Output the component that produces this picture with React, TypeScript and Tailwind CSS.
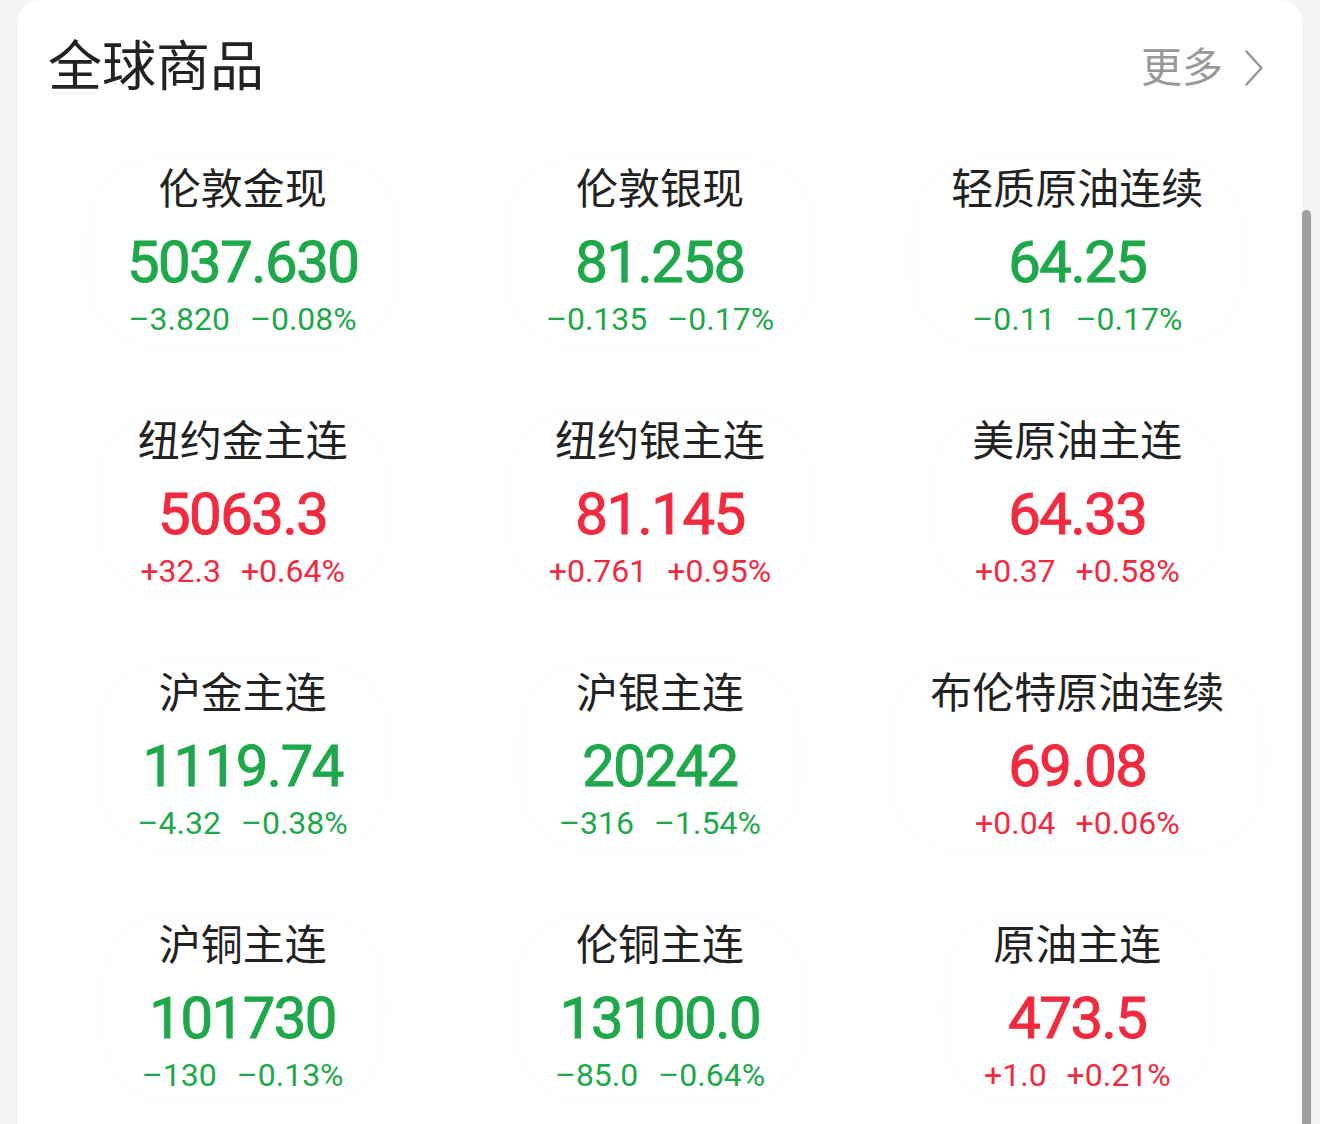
import React from "react";

type Item = { name: string; price: string; chg: string; pct: string; up: boolean };

const items: Item[] = [
  { name: "伦敦金现", price: "5037.630", chg: "–3.820", pct: "–0.08%", up: false },
  { name: "伦敦银现", price: "81.258", chg: "–0.135", pct: "–0.17%", up: false },
  { name: "轻质原油连续", price: "64.25", chg: "–0.11", pct: "–0.17%", up: false },
  { name: "纽约金主连", price: "5063.3", chg: "+32.3", pct: "+0.64%", up: true },
  { name: "纽约银主连", price: "81.145", chg: "+0.761", pct: "+0.95%", up: true },
  { name: "美原油主连", price: "64.33", chg: "+0.37", pct: "+0.58%", up: true },
  { name: "沪金主连", price: "1119.74", chg: "–4.32", pct: "–0.38%", up: false },
  { name: "沪银主连", price: "20242", chg: "–316", pct: "–1.54%", up: false },
  { name: "布伦特原油连续", price: "69.08", chg: "+0.04", pct: "+0.06%", up: true },
  { name: "沪铜主连", price: "101730", chg: "–130", pct: "–0.13%", up: false },
  { name: "伦铜主连", price: "13100.0", chg: "–85.0", pct: "–0.64%", up: false },
  { name: "原油主连", price: "473.5", chg: "+1.0", pct: "+0.21%", up: true },
];

function Cell({ it }: { it: Item }) {
  const color = it.up ? "text-[#f02a3f]" : "text-[#1fa84b]";
  return (
    <div className="flex justify-center">
      <div className="flex flex-col items-center px-8 rounded-[56px] shadow-[0_0_44px_rgba(0,0,0,0.016)]">
        <div className="text-[42px] leading-[48px] text-[#222222]">{it.name}</div>
        <div className={`mt-4 text-[58px] leading-[64px] font-normal tracking-[-1.5px] [-webkit-text-stroke:1px_currentColor] ${color}`}>{it.price}</div>
        <div className={`mt-[5px] flex gap-5 text-[32px] leading-[40px] font-normal ${color}`}>
          <span>{it.chg}</span>
          <span>{it.pct}</span>
        </div>
      </div>
    </div>
  );
}

export default function App() {
  return (
    <div
      className="w-[1320px] h-[1124px] overflow-hidden bg-[#f4f4f4] flex"
      style={{ fontFamily: 'Roboto, "Noto Sans CJK SC", sans-serif' }}
    >
      <div className="ml-[18px] w-[1284px] h-[1200px] bg-white rounded-t-[22px] flex flex-col">
        <div className="flex items-center justify-between pt-8 pl-[30px] pr-[39px] h-[104px]">
          <div className="text-[54px] leading-[72px] text-[#222222]">全球商品</div>
          <div className="flex items-center gap-[22px]">
            <span className="text-[41px] leading-[72px] text-[#999999]">更多</span>
            <svg width="18" height="36" viewBox="0 0 18 36" fill="none">
              <path d="M1.5 1.5 L16.5 18 L1.5 34.5" stroke="#999999" strokeWidth="2.6" strokeLinecap="round" strokeLinejoin="round" />
            </svg>
          </div>
        </div>
        <div className="mt-[62px] px-4 grid grid-cols-3 gap-y-[79px]">
          {items.map((it) => (
            <Cell key={it.name} it={it} />
          ))}
        </div>
      </div>
      <div className="w-[9px] mt-[210px] h-[1000px] bg-[#a0a0a0] rounded-t-[5px]" />
    </div>
  );
}
